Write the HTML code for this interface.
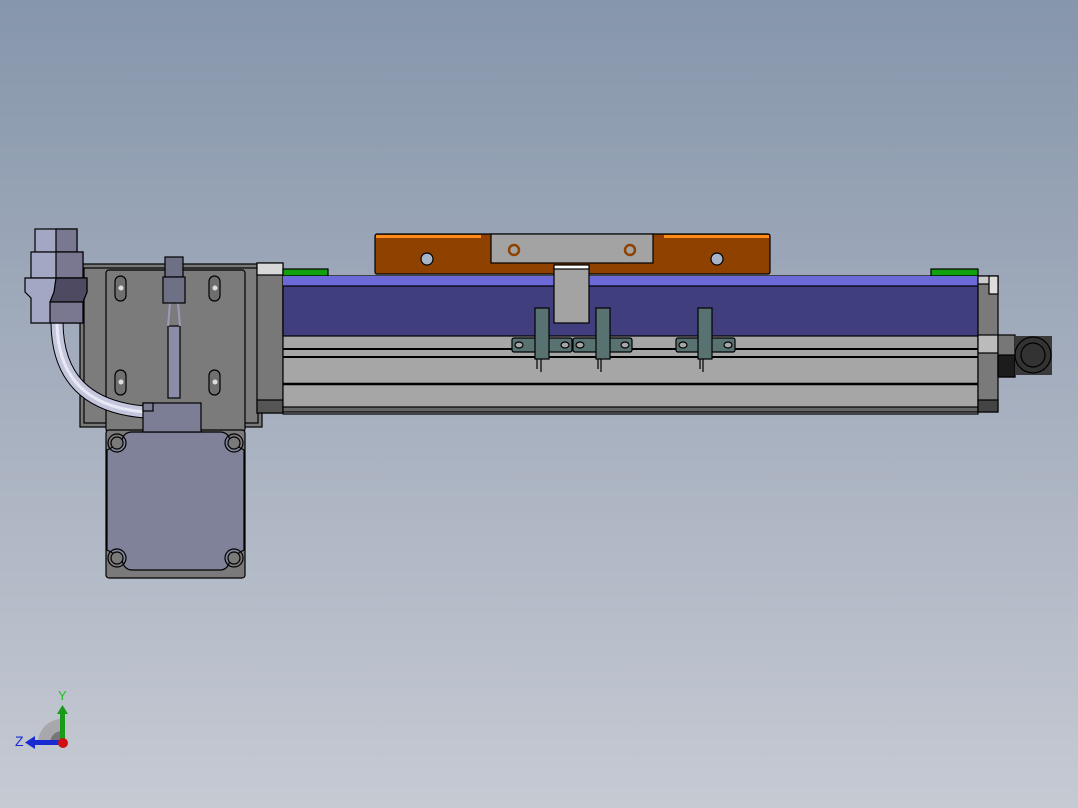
<!DOCTYPE html>
<html><head><style>
html,body{margin:0;padding:0;width:1078px;height:808px;overflow:hidden}
body{background:linear-gradient(#8696ab,#a3adbd 45%,#c6cad3);}
svg{position:absolute;left:0;top:0}
</style></head><body>
<svg width="1078" height="808" viewBox="0 0 1078 808" stroke="#000" stroke-width="1.2">
<rect x="80" y="264" width="182" height="163" fill="#797979"/>
<rect x="84" y="268" width="174" height="155" fill="#7c7c7c"/>
<rect x="106" y="270" width="139" height="162" rx="3" fill="#7b7b7b"/>
<g fill="#6f6f6f">
<rect x="115" y="276" width="11" height="25" rx="5.5"/><rect x="209" y="276" width="11" height="25" rx="5.5"/>
<rect x="115" y="370" width="11" height="25" rx="5.5"/><rect x="209" y="370" width="11" height="25" rx="5.5"/>
</g>
<g fill="#ddd" stroke="none"><circle cx="121" cy="288" r="2.5"/><circle cx="215" cy="288" r="2.5"/><circle cx="121" cy="382" r="2.5"/><circle cx="215" cy="382" r="2.5"/></g>
<rect x="106" y="430" width="139" height="148" rx="3" fill="#7a7a7a"/>
<path d="M132,432 H220 Q228,432 230,440 Q236,446 244,450 V550 Q236,554 230,560 Q228,570 220,570 H132 Q124,570 122,560 Q116,554 107,550 V450 Q116,446 122,440 Q124,432 132,432Z" fill="#7f8298"/>
<g fill="#7a7a7a"><circle cx="117" cy="443" r="6"/><circle cx="234" cy="443" r="6"/><circle cx="117" cy="558" r="6"/><circle cx="234" cy="558" r="6"/></g>
<g fill="none"><circle cx="117" cy="443" r="9"/><circle cx="234" cy="443" r="9"/><circle cx="117" cy="558" r="9"/><circle cx="234" cy="558" r="9"/></g>
<path d="M57,323 Q58,405 145,412" fill="none" stroke="#000" stroke-width="13"/>
<path d="M57,323 Q58,405 145,412" fill="none" stroke="#c4c6de" stroke-width="11"/>
<path d="M57,323 Q58,405 145,412" fill="none" stroke="#e8e9f4" stroke-width="3"/>
<rect x="168" y="326" width="12" height="72" fill="#8a8ca8"/>
<path d="M170,303 L168,326 M178,303 L180,326" stroke="#9a9cb8" stroke-width="2"/>
<rect x="143" y="403" width="58" height="29" fill="#7c7e96"/>
<rect x="143" y="403" width="10" height="8" fill="#7c7e96"/>
<rect x="165" y="257" width="18" height="20" fill="#6e7086"/>
<rect x="163" y="277" width="22" height="26" fill="#6e7086"/>
<rect x="35" y="229" width="42" height="23" fill="#a4a7c4"/><rect x="56" y="229" width="21" height="23" fill="#7a7890" />
<rect x="31" y="252" width="52" height="26" fill="#a4a7c4"/><rect x="56" y="252" width="27" height="26" fill="#7a7890"/>
<path d="M25,278 H87 V292 L83,302 V323 H31 V298 L25,292Z" fill="#a4a7c4"/>
<path d="M56,278 H87 V292 L83,302 H50 L54,292Z" fill="#4d4a62"/>
<rect x="50" y="302" width="33" height="21" fill="#7a7890"/>
<rect x="257" y="263" width="26" height="150" fill="#787878"/>
<rect x="257" y="263" width="26" height="12" fill="#d8d8d8"/>
<rect x="257" y="400" width="26" height="13" fill="#555"/>
<rect x="283" y="269" width="45" height="7" fill="#10a010"/>
<rect x="931" y="269" width="47" height="7" fill="#10a010"/>
<rect x="283" y="276" width="695" height="138" fill="#a6a6a6"/>
<rect x="283" y="276" width="695" height="10" fill="#6c6ad8" stroke="none"/>
<rect x="283" y="286" width="695" height="50" fill="#413e7e"/>
<line x1="283" y1="349" x2="978" y2="349" stroke-width="2"/>
<line x1="283" y1="357" x2="978" y2="357" stroke-width="2"/>
<line x1="283" y1="384" x2="978" y2="384" stroke-width="2.5"/>
<rect x="283" y="407" width="695" height="5" fill="#666"/>
<rect x="375" y="234" width="395" height="40" rx="2" fill="#8f4200"/>
<rect x="376" y="235" width="105" height="3" fill="#ff8c1a" stroke="none"/>
<rect x="664" y="235" width="105" height="3" fill="#ff8c1a" stroke="none"/>
<rect x="491" y="234" width="162" height="29" fill="#a3a3a3"/>
<circle cx="427" cy="259" r="6" fill="#a8b4c8"/><circle cx="717" cy="259" r="6" fill="#a8b4c8"/>
<circle cx="514" cy="250" r="5" fill="#a3a3a3" stroke="#8f4200" stroke-width="2.5"/>
<circle cx="630" cy="250" r="5" fill="#a3a3a3" stroke="#8f4200" stroke-width="2.5"/>
<rect x="554" y="265" width="35" height="58" fill="#a3a3a3"/>
<rect x="554" y="265" width="35" height="4" fill="#fff"/>
<g fill="#587272">
<rect x="512" y="338" width="60" height="14" rx="2"/><rect x="573" y="338" width="59" height="14" rx="2"/><rect x="676" y="338" width="59" height="14" rx="2"/>
<rect x="535" y="308" width="14" height="51"/><rect x="596" y="308" width="14" height="51"/><rect x="698" y="308" width="14" height="51"/>
</g>
<g fill="#a6a6a6"><ellipse cx="519" cy="345" rx="4" ry="3"/><ellipse cx="565" cy="345" rx="4" ry="3"/><ellipse cx="580" cy="345" rx="4" ry="3"/><ellipse cx="625" cy="345" rx="4" ry="3"/><ellipse cx="683" cy="345" rx="4" ry="3"/><ellipse cx="728" cy="345" rx="4" ry="3"/></g>
<path d="M537,359V369M541,359V372M598,359V369M601,359V372M700,359V369M703,359V372"/>
<rect x="978" y="276" width="20" height="136" fill="#7a7a7a"/>
<rect x="978" y="276" width="20" height="8" fill="#ccc"/>
<rect x="978" y="335" width="20" height="18" fill="#bbb"/>
<rect x="978" y="400" width="20" height="12" fill="#444"/>
<rect x="989" y="276" width="9" height="18" fill="#ddd"/>
<rect x="998" y="335" width="17" height="42" fill="#777"/>
<rect x="998" y="355" width="17" height="22" fill="#1c1c1c"/>
<rect x="1015" y="336" width="37" height="39" fill="#3a3a3a" stroke="none"/>
<circle cx="1033" cy="355" r="18" fill="#333"/>
<circle cx="1033" cy="355" r="12" fill="#333"/>
<g stroke="none">
<path d="M38,743 A24,24 0 0 1 62,719 V743Z" fill="#a8a8ac"/>
<path d="M50,743 A12,12 0 0 1 62,731 V743Z" fill="#777"/>
<rect x="60" y="713" width="5" height="30" fill="#1a9a1a"/>
<path d="M57,714 L62.5,705 L68,714Z" fill="#1a9a1a"/>
<rect x="34" y="740" width="26" height="5" fill="#1a2ad0"/>
<path d="M35,736 L25,742.5 L35,749Z" fill="#1a2ad0"/>
<circle cx="63" cy="743" r="5" fill="#d01010"/>
</g>
<text x="58" y="700" font-family="Liberation Sans,sans-serif" font-size="13" fill="#20c020" stroke="none">Y</text>
<text x="15" y="746" font-family="Liberation Sans,sans-serif" font-size="14" fill="#1a2ad0" stroke="none">Z</text>
</svg>
</body></html>
